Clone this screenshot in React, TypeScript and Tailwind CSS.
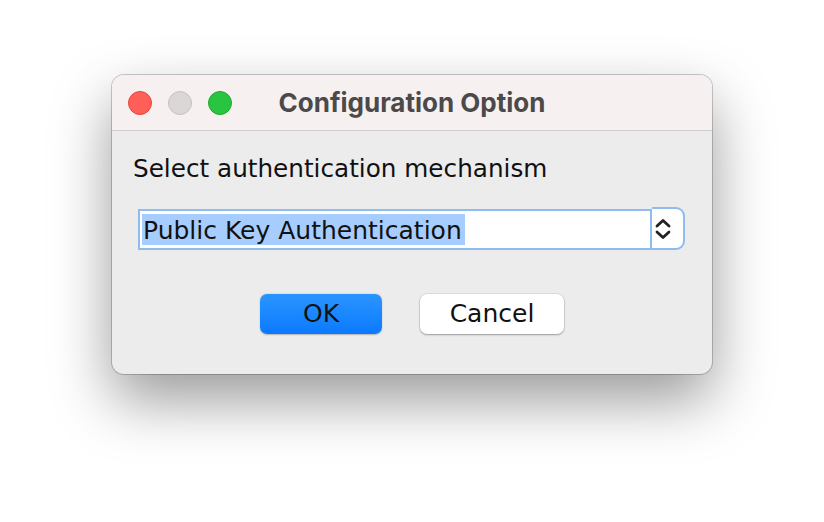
import React from 'react';

const body = { fontFamily: '"DejaVu Sans", "Open Sans", sans-serif' };
const title = { fontFamily: 'Inter, "Liberation Sans", sans-serif' };

const TrafficLight = ({ fill, ring }: { fill: string; ring: string }) => (
  <span className={`block w-[24px] h-[24px] rounded-full border ${fill} ${ring}`} />
);

const App: React.FC = () => {
  return (
    <div className="w-[824px] h-[522px] bg-white pl-[112px] pt-[75px]" style={body}>
      <div className="w-[600px] h-[299px] rounded-[12px] overflow-hidden bg-[#ececec] flex flex-col shadow-[0_0_0_1px_rgba(0,0,0,0.2),0_26px_60px_rgba(0,0,0,0.4)]">
        {/* title bar */}
        <div className="h-[56px] shrink-0 bg-[#f6f0f0] border-b border-[#d2cdcd] grid grid-cols-[1fr_auto_1fr] items-center">
          <div className="flex items-center gap-[16px] pl-[16px]">
            <TrafficLight fill="bg-[#ff5f57]" ring="border-[#e2463f]" />
            <TrafficLight fill="bg-[#dcd7d7]" ring="border-[#c6c0c0]" />
            <TrafficLight fill="bg-[#2ac540]" ring="border-[#1fa832]" />
          </div>
          <div className="text-[26px] font-bold text-[#4b4949] leading-none" style={title}>
            Configuration Option
          </div>
          <div />
        </div>

        {/* content */}
        <div className="flex flex-col pt-[23px] pl-[21px]">
          <div className="text-[24.7px] leading-[30px] text-[#111]">Select authentication mechanism</div>

          <div className="flex items-start mt-[23px] ml-[5px]">
            <div className="mt-[2px] w-[514px] h-[41px] bg-white border-2 border-[#8fbbee] p-[2px] flex items-center">
              <span className="bg-[#a6cdfe] h-[31px] pl-[1px] pr-[3px] pt-[2px] flex items-center text-[25px] text-[#111]">
                Public Key Authentication
              </span>
            </div>
            <div className="w-[33px] h-[43px] bg-white border-2 border-l-0 border-[#8fbbee] rounded-r-[9px] flex items-center pl-[2px]">
              <svg width="18" height="24" viewBox="0 0 18 24" fill="none" stroke="#222" strokeWidth="2.8" strokeLinecap="round" strokeLinejoin="round">
                <path d="M3 9 L9 3.5 L15 9" />
                <path d="M3 15 L9 20.5 L15 15" />
              </svg>
            </div>
          </div>

          <div className="flex justify-center gap-[38px] mt-[44px] pr-[21px]">
            <button className="w-[122px] h-[40px] rounded-[7px] bg-gradient-to-b from-[#2a95ff] to-[#0a79ff] text-[25px] text-[#111] shadow-[0_0.5px_1.5px_rgba(0,0,0,0.25)]">
              OK
            </button>
            <button className="w-[144px] h-[40px] rounded-[7px] bg-white text-[25px] text-[#111] shadow-[0_0_0_0.5px_rgba(0,0,0,0.12),0_1px_2px_rgba(0,0,0,0.3)]">
              Cancel
            </button>
          </div>
        </div>
      </div>
    </div>
  );
};

export default App;
